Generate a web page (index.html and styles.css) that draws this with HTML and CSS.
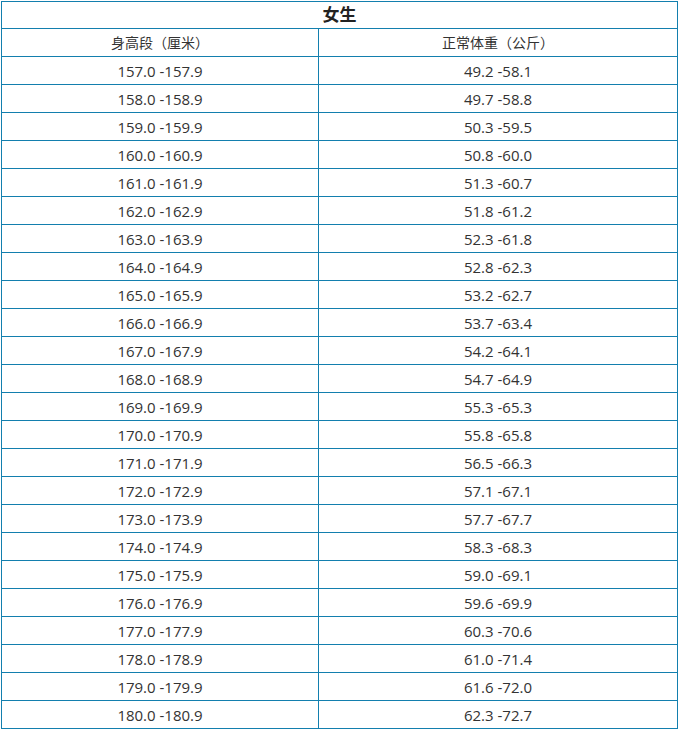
FILE: index.html
```html
<!DOCTYPE html>
<html lang="zh">
<head>
<meta charset="utf-8">
<link rel="stylesheet" href="styles.css">
</head>
<body>
<table class="tbl">
<colgroup><col class="col1"><col class="col2"></colgroup>
<thead>
<tr class="title-row"><th colspan="2">女生</th></tr>
<tr class="head-row"><td>身高段（厘米）</td><td>正常体重（公斤）</td></tr>
</thead>
<tbody>
<tr><td>157.0 -157.9</td><td>49.2 -58.1</td></tr>
<tr><td>158.0 -158.9</td><td>49.7 -58.8</td></tr>
<tr><td>159.0 -159.9</td><td>50.3 -59.5</td></tr>
<tr><td>160.0 -160.9</td><td>50.8 -60.0</td></tr>
<tr><td>161.0 -161.9</td><td>51.3 -60.7</td></tr>
<tr><td>162.0 -162.9</td><td>51.8 -61.2</td></tr>
<tr><td>163.0 -163.9</td><td>52.3 -61.8</td></tr>
<tr><td>164.0 -164.9</td><td>52.8 -62.3</td></tr>
<tr><td>165.0 -165.9</td><td>53.2 -62.7</td></tr>
<tr><td>166.0 -166.9</td><td>53.7 -63.4</td></tr>
<tr><td>167.0 -167.9</td><td>54.2 -64.1</td></tr>
<tr><td>168.0 -168.9</td><td>54.7 -64.9</td></tr>
<tr><td>169.0 -169.9</td><td>55.3 -65.3</td></tr>
<tr><td>170.0 -170.9</td><td>55.8 -65.8</td></tr>
<tr><td>171.0 -171.9</td><td>56.5 -66.3</td></tr>
<tr><td>172.0 -172.9</td><td>57.1 -67.1</td></tr>
<tr><td>173.0 -173.9</td><td>57.7 -67.7</td></tr>
<tr><td>174.0 -174.9</td><td>58.3 -68.3</td></tr>
<tr><td>175.0 -175.9</td><td>59.0 -69.1</td></tr>
<tr><td>176.0 -176.9</td><td>59.6 -69.9</td></tr>
<tr><td>177.0 -177.9</td><td>60.3 -70.6</td></tr>
<tr><td>178.0 -178.9</td><td>61.0 -71.4</td></tr>
<tr><td>179.0 -179.9</td><td>61.6 -72.0</td></tr>
<tr><td>180.0 -180.9</td><td>62.3 -72.7</td></tr>
</tbody>
</table>
</body>
</html>
```
FILE: styles.css
```css
html, body {
  margin: 0;
  padding: 0;
  background: #fff;
}
body {
  padding: 1px 0 0 1px;
  font-family: "Open Sans", "Noto Sans CJK SC", sans-serif;
  color: #333;
}
.tbl {
  border-collapse: collapse;
  width: 677px;
  table-layout: fixed;
}
.col1 {
  width: 317px;
}
.tbl th, .tbl td {
  border: 1px solid #137fae;
  text-align: center;
  padding: 0;
  box-sizing: border-box;
  font-size: 15px;
  line-height: 20px;
  vertical-align: middle;
}
.tbl .title-row th {
  height: 27px;
  font-size: 17px;
  font-weight: bold;
  color: #222;
}
.tbl .head-row td {
  height: 28px;
  font-size: 14px;
}
.tbl tbody td {
  height: 28px;
}
```
